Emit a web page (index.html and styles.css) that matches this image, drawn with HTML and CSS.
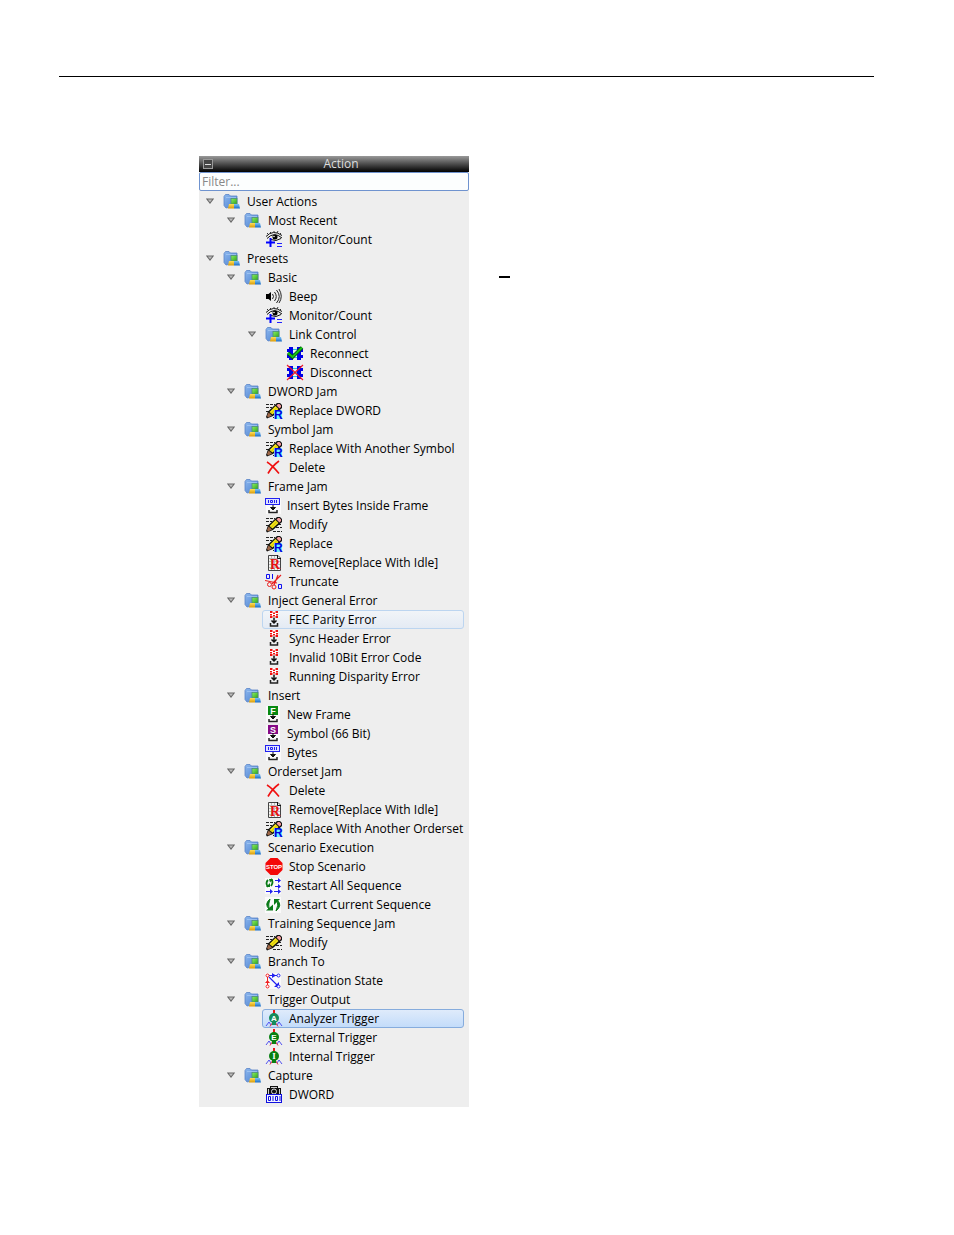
FILE: index.html
```
<!DOCTYPE html>
<html lang="en">
<head>
    <meta charset="UTF-8">
    <meta name="viewport" content="width=device-width, initial-scale=1.0">
    <title>Action</title>
    <link rel="stylesheet" href="styles.css">
</head>
<body>
    <!-- Gradients for the icons -->
    <svg class="icon-gradients" aria-hidden="true">
        <defs>
            <linearGradient id="g-folder" x1="0" y1="0" x2="1" y2="1">
                <stop offset="0" stop-color="#8db8ee"/>
                <stop offset="1" stop-color="#4a7fd0"/>
            </linearGradient>
            <linearGradient id="g-green" x1="0" y1="0" x2="1" y2="1">
                <stop offset="0" stop-color="#8cf060"/>
                <stop offset="1" stop-color="#2ea51c"/>
            </linearGradient>
            <linearGradient id="g-yellow" x1="0" y1="0" x2="0" y2="1">
                <stop offset="0" stop-color="#ffdf5a"/>
                <stop offset="1" stop-color="#d99a08"/>
            </linearGradient>
            <linearGradient id="g-blue" x1="0" y1="0" x2="0" y2="1">
                <stop offset="0" stop-color="#7cc4f8"/>
                <stop offset="1" stop-color="#1c6cc4"/>
            </linearGradient>
        </defs>
    </svg>

    <!-- Icon set -->
    <svg class="icon-set" aria-hidden="true">
        <symbol id="folder" viewBox="0 0 18 18">
            <path d="M1 3.500 2.500 1.500H6L7.500 3H14V13L3 15 1 12.500z" fill="url(#g-folder)" stroke="#5a84c6" stroke-width=".8"/>
            <path d="M3 4.500H13" stroke="#a4c6f2" stroke-width=".8"/>
            <rect x="8" y="5.500" width="6" height="5.500" fill="url(#g-green)" stroke="#4f8f78" stroke-width=".8"/>
            <path d="M6 11H11V15.500H5z" fill="url(#g-yellow)"/>
            <path d="M11 11H16L17 15.500H11z" fill="url(#g-blue)"/>
        </symbol>
        <symbol id="monitor" viewBox="0 0 18 18">
            <path d="M1 5.500Q8-2 17 4.500M2 7.500Q9 0 17 7M6 8.500Q11 11 16 7.500" fill="none" stroke="#111"/>
            <path d="M3 3 2 2M6 2 5 1M9 1V0M12 2 13 0M15 3 16 2" stroke="#333"/>
            <circle cx="10" cy="6" r="2.500"/>
            <circle cx="9" cy="5.500" r=".8" fill="#fff"/>
            <path d="M5.500 7V16M1 11.500H10" stroke="#00f" stroke-width="2"/>
            <path d="M12 12.500H17M12 15.500H17" stroke="#22f"/>
        </symbol>
        <symbol id="beep" viewBox="0 0 18 18">
            <path d="M1 6H3.500L6 4V13L3.500 11H1z"/>
            <path d="M7.500 6Q9.500 8.500 7.500 11M9.500 4Q13 8.500 9.500 13M11.500 2Q17 8.500 11.500 15M14 1Q18.500 8.500 14 15" fill="none" stroke="#222"/>
        </symbol>
        <symbol id="link" viewBox="0 0 18 18">
            <path d="M3 2H7V15H3zM11 2H15V15H11z" fill="#0000e8"/>
            <path d="M1 5.500H17M1 11.500H17" stroke="#0000e8" stroke-width="3"/>
            <path d="M7 3H11V14H7z" fill="#dff2f6"/>
            <path d="M7 4.500H11M7 8.500H11M7 12.500H11" stroke="#2bc4d8"/>
        </symbol>
        <symbol id="reconnect" viewBox="0 0 18 18">
            <use href="#link"/>
            <path d="M2 8 6.500 12 16 2.500" fill="none" stroke="#064a10" stroke-width="3.500"/>
            <path d="M2 8 6.500 12 16 2.500" fill="none" stroke="#16c416" stroke-width="2"/>
        </symbol>
        <symbol id="disconnect" viewBox="0 0 18 18">
            <use href="#link"/>
            <path d="M1 1 17 16M17 1 1 16" stroke="#f01828" stroke-width="1.200"/>
        </symbol>
        <symbol id="modify" viewBox="0 0 18 18">
            <path d="M1 2.500H10M1 5.500H7M1 9.500H4M13 8.500H17M11 11.500H17M8 15.500H17" stroke="#222" stroke-dasharray="3 1"/>
            <path d="M3 9.500 12 1H15L17 3V6L8 14 2 16.500 1 15z" fill="#111"/>
            <path d="M4.500 10 10.500 4 13.500 7 7.500 12.500z" fill="#f8e818"/>
            <path d="M11.500 3.500 13 2H14.500L16 3.500V5L14.500 6.500z" fill="#f79c9c"/>
            <path d="M2 14 3.500 10.500 7 13.500 3 15.500z" fill="#a06848"/>
            <path d="M6 11.500 12 5.500" stroke="#a89400" stroke-width=".6"/>
        </symbol>
        <symbol id="replace" viewBox="0 0 18 18">
            <use href="#modify"/>
            <path d="M9 8H16L17 9V17H9z" fill="#6df0ff"/>
            <text x="9" y="17" class="glyph" font-size="12" fill="#0000e0">R</text>
        </symbol>
        <symbol id="delete" viewBox="0 0 18 18">
            <path d="M2 3Q7 6 14 14.500M14 2Q7 7 3 14.500" fill="none" stroke="#f01010" stroke-width="1.600"/>
        </symbol>
        <symbol id="into" viewBox="0 0 18 18">
            <path d="M8 8V11M5.500 10.500H10.500L8 13z" fill="#111" stroke="#111"/>
            <path d="M4 13V15.500H12V13" fill="none" stroke="#222" stroke-width="1.500"/>
        </symbol>
        <symbol id="bytes" viewBox="0 0 16 18">
            <path d="M1 1H16V17H1z" fill="#fafafa"/>
            <rect x=".5" y="1.500" width="14" height="6" fill="#dfe3ff" stroke="#2020f0"/>
            <path d="M3.500 3V6M5.500 3.500H7.500V5.500H5.500zM9.500 3V6M11.500 3V6" fill="none" stroke="#2020f0"/>
            <use href="#into" width="18" height="18"/>
        </symbol>
        <symbol id="remove" viewBox="0 0 18 18">
            <path d="M3.500 1.500H13L15.500 4V16.500H3.500z" fill="#f4f4f4" stroke="#444"/>
            <path d="M6.500 2V16M9.500 2V16M12.500 2V16M4 4.500H15M4 7.500H15M4 10.500H15M4 13.500H15" stroke="#bbb"/>
            <path d="M12.500 1V4.500H16" fill="none" stroke="#111"/>
            <text x="5" y="15" class="glyph serif" font-size="14" fill="#e81010">R</text>
        </symbol>
        <symbol id="truncate" viewBox="0 0 18 18">
            <path d="M1.500 1.500H4.500V5.500H1.500zM7.500 1V6M13.500 11.500H16.500V15.500H13.500z" fill="none" stroke="#1010f0"/>
            <path d="M0 7.500 12 10M16 2 7 11M13 2 9 12" fill="none" stroke="#e82020" stroke-width="1.200"/>
            <circle cx="4.500" cy="11.500" r="2" fill="none" stroke="#e82020"/>
            <circle cx="9" cy="14" r="2" fill="none" stroke="#e82020"/>
        </symbol>
        <symbol id="error" viewBox="0 0 18 18">
            <path d="M5 0H13V7H5z" fill="#fff"/>
            <path d="M5 0H7.500V2H5zM10.500 0H13V2H10.500zM8 1.500H10V3H8zM5 3H7V4.500H5zM11 3H13V4.500H11zM8 4H10V5.500H8zM5 5H7.500V7H5zM10.500 5H13V7H10.500z" fill="#f01010"/>
            <path d="M9 6.500V12M6.500 9.500 9 12 11.500 9.500" fill="none" stroke="#111" stroke-width="1.500"/>
            <path d="M5.500 12V15H12.500V12" fill="none" stroke="#222" stroke-width="1.500"/>
        </symbol>
        <symbol id="frame" viewBox="0 0 16 18">
            <path d="M1 0H15V17H1z" fill="#fafafa"/>
            <path d="M3 0H13V9H3z" fill="#078a12"/>
            <text x="8" y="8" class="glyph" font-size="9" text-anchor="middle" fill="#fff">F</text>
            <use href="#into" width="18" height="18"/>
        </symbol>
        <symbol id="symbol" viewBox="0 0 16 18">
            <path d="M1 0H15V17H1z" fill="#fafafa"/>
            <path d="M3 0H13V9H3z" fill="#860a86"/>
            <text x="8" y="8" class="glyph" font-size="9" text-anchor="middle" fill="#fff">S</text>
            <use href="#into" width="18" height="18"/>
        </symbol>
        <symbol id="stop" viewBox="0 0 18 18">
            <path d="M5.500 0H12.500L17.500 5V12L12.500 17H5.500L.500 12V5z" fill="#f40808"/>
            <text x="9" y="11" class="glyph" font-size="6" text-anchor="middle" fill="#fff">STOP</text>
        </symbol>
        <symbol id="restart-all" viewBox="0 0 16 18">
            <path d="M0 1H16V17H0z" fill="#fafafa"/>
            <path d="M3 10Q0 6 3 3M6 9Q9 5 6 2" fill="none" stroke="#0a7a18" stroke-width="1.800"/>
            <path d="M1 10H5V6zM4 2H8L5 5.500z" fill="#0a7a18"/>
            <path d="M10 3.500H15M10 9.500H15M1 14.500H6M9 14.500H15" stroke="#2020f0"/>
            <path d="M13 1 16 3.500 13 6zM13 7 16 9.500 13 12zM13 12 16 14.500 13 17zM5 12 8 14.500 5 17z" fill="#2020f0"/>
        </symbol>
        <symbol id="restart" viewBox="0 0 16 18">
            <path d="M0 1H16V17H0z" fill="#fafafa"/>
            <path d="M5 3Q-1 8 4 13Q3 8 5 3zM11 15Q18 9 12 4Q14 9 11 15z" fill="#0a7a18" stroke="#0a7a18"/>
            <path d="M1 14.500H8V8.500zM9 9V3H15z" fill="#0a7a18"/>
        </symbol>
        <symbol id="branch" viewBox="0 0 16 18">
            <path d="M0 1H16V17H0z" fill="#fafafa"/>
            <path d="M4 3.500H13M4 5 13 14" stroke="#2020f0" stroke-width="1.200"/>
            <path d="M7 1 11 3.500 7 6zM14 10V15H9z" fill="#2020f0"/>
            <path d="M2.500 5V13" stroke="#f02020"/>
            <path d="M0 11H5L2.500 8z" fill="#f02020"/>
            <circle cx="2.500" cy="3.500" r="1.500" fill="#fff" stroke="#f02020"/>
            <circle cx="2.500" cy="14.500" r="1.500" fill="#fff" stroke="#f02020"/>
            <circle cx="13.500" cy="3.500" r="1.500" fill="#fff" stroke="#2020f0"/>
            <circle cx="13.500" cy="14.500" r="1.500" fill="#fff" stroke="#2020f0"/>
        </symbol>
        <symbol id="trigger" viewBox="0 0 18 18">
            <path d="M9 0V4" stroke="#e81818" stroke-width="2"/>
            <path d="M1 16 4 12 6 15M12 15 14 12 17 16" fill="none" stroke="#5050f0"/>
            <path d="M8 12 5 16.500M10 12 13 16.500" stroke="#e83030"/>
            <circle cx="9" cy="8" r="5" fill="currentColor"/>
            <path d="M7 12H11V15H7z" fill="currentColor"/>
        </symbol>
        <symbol id="trigger-a" viewBox="0 0 18 18">
            <g color="#168c5c"><use href="#trigger"/></g>
            <text x="9" y="11" class="glyph" font-size="8" text-anchor="middle" fill="#fff">A</text>
        </symbol>
        <symbol id="trigger-e" viewBox="0 0 18 18">
            <g color="#088012"><use href="#trigger"/></g>
            <text x="9" y="11" class="glyph" font-size="8" text-anchor="middle" fill="#fff">E</text>
        </symbol>
        <symbol id="trigger-i" viewBox="0 0 18 18">
            <g color="#088012"><use href="#trigger"/></g>
            <text x="9" y="11" class="glyph serif" font-size="9" text-anchor="middle" fill="#fff">I</text>
        </symbol>
        <symbol id="capture" viewBox="0 0 18 18">
            <path d="M2 2H5V0H13V2H16V9H2z" fill="#111"/>
            <path d="M3.500 3V8M14.500 3V8M6 1.500H12" stroke="#ccc"/>
            <circle cx="9" cy="5.500" r="2.500" fill="#111" stroke="#ddd"/>
            <rect x="1.500" y="8.500" width="15" height="8" fill="#f4f4ff" stroke="#1010e0"/>
            <path d="M3.500 10.500H5.500V14.500H3.500zM8 10V15M10.500 10.500H12.500V14.500H10.500zM15 10V15" fill="none" stroke="#1010e0"/>
        </symbol>
    </svg>

    <main class="page">
        <hr class="page-rule">

        <div class="content">
            <section class="panel">
                <header class="panel-header">
                    <button class="collapse" type="button" aria-label="Collapse"></button>
                    <h1>Action</h1>
                </header>
                <input class="filter" type="text" placeholder="Filter..." aria-label="Filter">

                <ul class="tree">
                    <li>
                        <div class="row"><button class="toggle" type="button" aria-label="Toggle"></button><svg class="icon"><use href="#folder"/></svg>User Actions</div>
                        <ul>
                            <li>
                                <div class="row"><button class="toggle" type="button" aria-label="Toggle"></button><svg class="icon"><use href="#folder"/></svg>Most Recent</div>
                                <ul>
                                    <li class="leaf"><svg class="icon"><use href="#monitor"/></svg>Monitor/Count</li>
                                </ul>
                            </li>
                        </ul>
                    </li>
                    <li>
                        <div class="row"><button class="toggle" type="button" aria-label="Toggle"></button><svg class="icon"><use href="#folder"/></svg>Presets</div>
                        <ul>
                            <li>
                                <div class="row"><button class="toggle" type="button" aria-label="Toggle"></button><svg class="icon"><use href="#folder"/></svg>Basic</div>
                                <ul>
                                    <li class="leaf"><svg class="icon"><use href="#beep"/></svg>Beep</li>
                                    <li class="leaf"><svg class="icon"><use href="#monitor"/></svg>Monitor/Count</li>
                                    <li>
                                        <div class="row"><button class="toggle" type="button" aria-label="Toggle"></button><svg class="icon"><use href="#folder"/></svg>Link Control</div>
                                        <ul>
                                            <li class="leaf"><svg class="icon"><use href="#reconnect"/></svg>Reconnect</li>
                                            <li class="leaf"><svg class="icon"><use href="#disconnect"/></svg>Disconnect</li>
                                        </ul>
                                    </li>
                                </ul>
                            </li>
                            <li>
                                <div class="row"><button class="toggle" type="button" aria-label="Toggle"></button><svg class="icon"><use href="#folder"/></svg>DWORD Jam</div>
                                <ul>
                                    <li class="leaf"><svg class="icon"><use href="#replace"/></svg>Replace DWORD</li>
                                </ul>
                            </li>
                            <li>
                                <div class="row"><button class="toggle" type="button" aria-label="Toggle"></button><svg class="icon"><use href="#folder"/></svg>Symbol Jam</div>
                                <ul>
                                    <li class="leaf"><svg class="icon"><use href="#replace"/></svg>Replace With Another Symbol</li>
                                    <li class="leaf"><svg class="icon"><use href="#delete"/></svg>Delete</li>
                                </ul>
                            </li>
                            <li>
                                <div class="row"><button class="toggle" type="button" aria-label="Toggle"></button><svg class="icon"><use href="#folder"/></svg>Frame Jam</div>
                                <ul>
                                    <li class="leaf"><svg class="icon narrow"><use href="#bytes"/></svg>Insert Bytes Inside Frame</li>
                                    <li class="leaf"><svg class="icon"><use href="#modify"/></svg>Modify</li>
                                    <li class="leaf"><svg class="icon"><use href="#replace"/></svg>Replace</li>
                                    <li class="leaf"><svg class="icon"><use href="#remove"/></svg>Remove[Replace With Idle]</li>
                                    <li class="leaf"><svg class="icon"><use href="#truncate"/></svg>Truncate</li>
                                </ul>
                            </li>
                            <li>
                                <div class="row"><button class="toggle" type="button" aria-label="Toggle"></button><svg class="icon"><use href="#folder"/></svg>Inject General Error</div>
                                <ul>
                                    <li class="leaf hovered"><svg class="icon"><use href="#error"/></svg>FEC Parity Error</li>
                                    <li class="leaf"><svg class="icon"><use href="#error"/></svg>Sync Header Error</li>
                                    <li class="leaf"><svg class="icon"><use href="#error"/></svg>Invalid 10Bit Error Code</li>
                                    <li class="leaf"><svg class="icon"><use href="#error"/></svg>Running Disparity Error</li>
                                </ul>
                            </li>
                            <li>
                                <div class="row"><button class="toggle" type="button" aria-label="Toggle"></button><svg class="icon"><use href="#folder"/></svg>Insert</div>
                                <ul>
                                    <li class="leaf"><svg class="icon narrow"><use href="#frame"/></svg>New Frame</li>
                                    <li class="leaf"><svg class="icon narrow"><use href="#symbol"/></svg>Symbol (66 Bit)</li>
                                    <li class="leaf"><svg class="icon narrow"><use href="#bytes"/></svg>Bytes</li>
                                </ul>
                            </li>
                            <li>
                                <div class="row"><button class="toggle" type="button" aria-label="Toggle"></button><svg class="icon"><use href="#folder"/></svg>Orderset Jam</div>
                                <ul>
                                    <li class="leaf"><svg class="icon"><use href="#delete"/></svg>Delete</li>
                                    <li class="leaf"><svg class="icon"><use href="#remove"/></svg>Remove[Replace With Idle]</li>
                                    <li class="leaf"><svg class="icon"><use href="#replace"/></svg>Replace With Another Orderset</li>
                                </ul>
                            </li>
                            <li>
                                <div class="row"><button class="toggle" type="button" aria-label="Toggle"></button><svg class="icon"><use href="#folder"/></svg>Scenario Execution</div>
                                <ul>
                                    <li class="leaf"><svg class="icon"><use href="#stop"/></svg>Stop Scenario</li>
                                    <li class="leaf"><svg class="icon narrow"><use href="#restart-all"/></svg>Restart All Sequence</li>
                                    <li class="leaf"><svg class="icon narrow"><use href="#restart"/></svg>Restart Current Sequence</li>
                                </ul>
                            </li>
                            <li>
                                <div class="row"><button class="toggle" type="button" aria-label="Toggle"></button><svg class="icon"><use href="#folder"/></svg>Training Sequence Jam</div>
                                <ul>
                                    <li class="leaf"><svg class="icon"><use href="#modify"/></svg>Modify</li>
                                </ul>
                            </li>
                            <li>
                                <div class="row"><button class="toggle" type="button" aria-label="Toggle"></button><svg class="icon"><use href="#folder"/></svg>Branch To</div>
                                <ul>
                                    <li class="leaf"><svg class="icon narrow"><use href="#branch"/></svg>Destination State</li>
                                </ul>
                            </li>
                            <li>
                                <div class="row"><button class="toggle" type="button" aria-label="Toggle"></button><svg class="icon"><use href="#folder"/></svg>Trigger Output</div>
                                <ul>
                                    <li class="leaf selected"><svg class="icon"><use href="#trigger-a"/></svg>Analyzer Trigger</li>
                                    <li class="leaf"><svg class="icon"><use href="#trigger-e"/></svg>External Trigger</li>
                                    <li class="leaf"><svg class="icon"><use href="#trigger-i"/></svg>Internal Trigger</li>
                                </ul>
                            </li>
                            <li>
                                <div class="row"><button class="toggle" type="button" aria-label="Toggle"></button><svg class="icon"><use href="#folder"/></svg>Capture</div>
                                <ul>
                                    <li class="leaf"><svg class="icon"><use href="#capture"/></svg>DWORD</li>
                                </ul>
                            </li>
                        </ul>
                    </li>
                </ul>
            </section>

            <hr class="dash">
        </div>
    </main>

    <script>
        // Expand / collapse a branch
        document.querySelectorAll('.toggle').forEach((button) => {
            button.addEventListener('click', () => {
                const list = button.closest('li').querySelector('ul');
                list.hidden = !list.hidden;
            });
        });
    </script>
</body>
</html>
```
FILE: styles.css
```
* {
    box-sizing: border-box;
}

body {
    margin: 0;
    background: #fff;
    color: #000;
    font-family: "Open Sans", "Segoe UI", sans-serif;
    font-size: 12px;
}

.icon-gradients {
    position: absolute;
    width: 0;
    height: 0;
}

.icon-set {
    display: none;
}

.glyph {
    font-family: "Liberation Sans", Arial, sans-serif;
    font-weight: bold;
}

.glyph.serif {
    font-family: "Liberation Serif", serif;
}

.page {
    padding: 76px 80px 80px 59px;
}

.page-rule {
    margin: 0;
    border: none;
    border-top: 1px solid #000;
}

.content {
    display: flex;
    align-items: flex-start;
    gap: 30px;
    padding: 79px 0 0 140px;
}

.panel {
    width: 270px;
    background: #eee;
}

.panel-header {
    display: flex;
    align-items: center;
    height: 16px;
    padding-left: 4px;
    background: linear-gradient(#999, #000);
}

.panel-header h1 {
    flex: 1;
    margin: 0;
    color: #ddd;
    font-size: 12px;
    font-weight: normal;
    line-height: 16px;
    text-align: center;
}

.collapse {
    display: flex;
    align-items: center;
    justify-content: center;
    width: 10px;
    height: 10px;
    padding: 0;
    border: 1px solid #999;
    background: #444;
}

.collapse::before {
    content: "";
    width: 6px;
    height: 1px;
    background: #ddd;
}

.filter {
    display: block;
    width: 100%;
    height: 19px;
    padding: 0 2px;
    border: 1px solid #6f93cf;
    border-radius: 2px;
    background: #fcfefe;
    font: inherit;
}

.filter::placeholder {
    color: #888;
}

.tree,
.tree ul {
    margin: 0;
    padding: 0;
    list-style: none;
}

.tree {
    padding: 1px 0 3px 6px;
}

.tree ul {
    padding-left: 21px;
}

.row,
.leaf {
    display: flex;
    align-items: center;
    height: 19px;
    white-space: nowrap;
}

.leaf {
    margin: 0 5px 0 15px;
    padding-left: 2px;
    border: 1px solid transparent;
    border-radius: 3px;
}

.hovered {
    border-color: #bcd5f0;
    background: linear-gradient(#f1f4f8, #e4ebf4);
}

.selected {
    border-color: #86acdd;
    background: linear-gradient(#dfebfb, #c3dcfa);
}

.toggle {
    position: relative;
    width: 10px;
    height: 10px;
    margin-right: 8px;
    padding: 0;
    border: none;
    background: #666;
    clip-path: polygon(8% 20%, 92% 20%, 50% 75%);
}

/* lighter centre of the arrow */
.toggle::before {
    content: "";
    position: absolute;
    inset: 0;
    background: #bbb;
    clip-path: polygon(28% 30%, 72% 30%, 50% 58%);
}

.icon {
    flex: none;
    width: 18px;
    height: 18px;
    margin-right: 6px;
}

.narrow {
    width: 16px;
}

.dash {
    width: 11px;
    margin: 120px 0 0;
    border: none;
    border-top: 2px solid #000;
}
```
